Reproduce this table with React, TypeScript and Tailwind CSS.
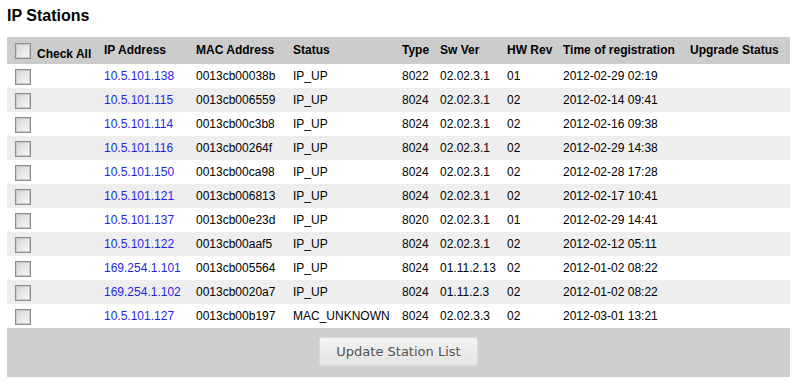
import React from "react";

type Station = {
  ip: string;
  mac: string;
  status: string;
  type: string;
  sw: string;
  hw: string;
  time: string;
};

const stations: Station[] = [
  { ip: "10.5.101.138", mac: "0013cb00038b", status: "IP_UP", type: "8022", sw: "02.02.3.1", hw: "01", time: "2012-02-29 02:19" },
  { ip: "10.5.101.115", mac: "0013cb006559", status: "IP_UP", type: "8024", sw: "02.02.3.1", hw: "02", time: "2012-02-14 09:41" },
  { ip: "10.5.101.114", mac: "0013cb00c3b8", status: "IP_UP", type: "8024", sw: "02.02.3.1", hw: "02", time: "2012-02-16 09:38" },
  { ip: "10.5.101.116", mac: "0013cb00264f", status: "IP_UP", type: "8024", sw: "02.02.3.1", hw: "02", time: "2012-02-29 14:38" },
  { ip: "10.5.101.150", mac: "0013cb00ca98", status: "IP_UP", type: "8024", sw: "02.02.3.1", hw: "02", time: "2012-02-28 17:28" },
  { ip: "10.5.101.121", mac: "0013cb006813", status: "IP_UP", type: "8024", sw: "02.02.3.1", hw: "02", time: "2012-02-17 10:41" },
  { ip: "10.5.101.137", mac: "0013cb00e23d", status: "IP_UP", type: "8020", sw: "02.02.3.1", hw: "01", time: "2012-02-29 14:41" },
  { ip: "10.5.101.122", mac: "0013cb00aaf5", status: "IP_UP", type: "8024", sw: "02.02.3.1", hw: "02", time: "2012-02-12 05:11" },
  { ip: "169.254.1.101", mac: "0013cb005564", status: "IP_UP", type: "8024", sw: "01.11.2.13", hw: "02", time: "2012-01-02 08:22" },
  { ip: "169.254.1.102", mac: "0013cb0020a7", status: "IP_UP", type: "8024", sw: "01.11.2.3", hw: "02", time: "2012-01-02 08:22" },
  { ip: "10.5.101.127", mac: "0013cb00b197", status: "MAC_UNKNOWN", type: "8024", sw: "02.02.3.3", hw: "02", time: "2012-03-01 13:21" },
];

// old-style windows checkbox look
function Box() {
  return (
    <span className="inline-block h-[16px] w-[16px] border border-[#8c8c8c] bg-gradient-to-br from-[#d4d4d4] to-[#fbfbfb] shadow-[inset_0_0_0_1px_#c9c9c9] align-middle" />
  );
}

export default function App() {
  return (
    <div className="w-[797px] h-[383px] bg-white px-[7px] pt-[6px] font-['Liberation_Sans',Arial,sans-serif] text-[12px] text-black">
      <h1 className="text-[16px] font-bold leading-[19px]">IP Stations</h1>
      <table className="mt-[12px] w-[783px] table-fixed border-collapse">
        <colgroup>
          <col className="w-[93px]" />
          <col className="w-[92px]" />
          <col className="w-[97px]" />
          <col className="w-[109px]" />
          <col className="w-[38px]" />
          <col className="w-[67px]" />
          <col className="w-[56px]" />
          <col className="w-[127px]" />
          <col className="w-[104px]" />
        </colgroup>
        <thead>
          <tr className="h-[27px] bg-[#cccccc] text-left font-bold">
            <th className="pl-[8px] pt-[1px]">
              <div className="flex items-center gap-[6px]">
                <Box />
                <span className="pt-[6px]">Check All</span>
              </div>
            </th>
            <th className="pl-[4px] pb-[1px]">IP Address</th>
            <th className="pl-[4px] pb-[1px]">MAC Address</th>
            <th className="pl-[4px] pb-[1px]">Status</th>
            <th className="pl-[4px] pb-[1px]">Type</th>
            <th className="pl-[4px] pb-[1px]">Sw Ver</th>
            <th className="pl-[4px] pb-[1px]">HW Rev</th>
            <th className="pl-[4px] pb-[1px]">Time of registration</th>
            <th className="pl-[4px] pb-[1px]">Upgrade Status</th>
          </tr>
        </thead>
        <tbody>
          {stations.map((s, i) => (
            <tr key={s.ip} className={`h-[24px] ${i % 2 === 1 ? "bg-[#eeeeee]" : "bg-white"}`}>
              <td className="pl-[8px]">
                <Box />
              </td>
              <td className="pl-[4px] text-[#1f1fe8]">{s.ip}</td>
              <td className="pl-[4px]">{s.mac}</td>
              <td className="pl-[4px]">{s.status}</td>
              <td className="pl-[4px]">{s.type}</td>
              <td className="pl-[4px]">{s.sw}</td>
              <td className="pl-[4px]">{s.hw}</td>
              <td className="pl-[4px]">{s.time}</td>
              <td className="pl-[4px]"></td>
            </tr>
          ))}
        </tbody>
      </table>
      <div className="flex h-[49px] w-[783px] justify-center bg-[#d0cfcf] pt-[9px]">
        <button className="h-[29px] w-[159px] rounded-[3px] border border-[#dcdcdc] bg-gradient-to-b from-[#f3f3f3] to-[#e4e4e4] font-['DejaVu_Sans',Verdana,sans-serif] text-[13px] text-[#555555]">
          Update Station List
        </button>
      </div>
    </div>
  );
}
